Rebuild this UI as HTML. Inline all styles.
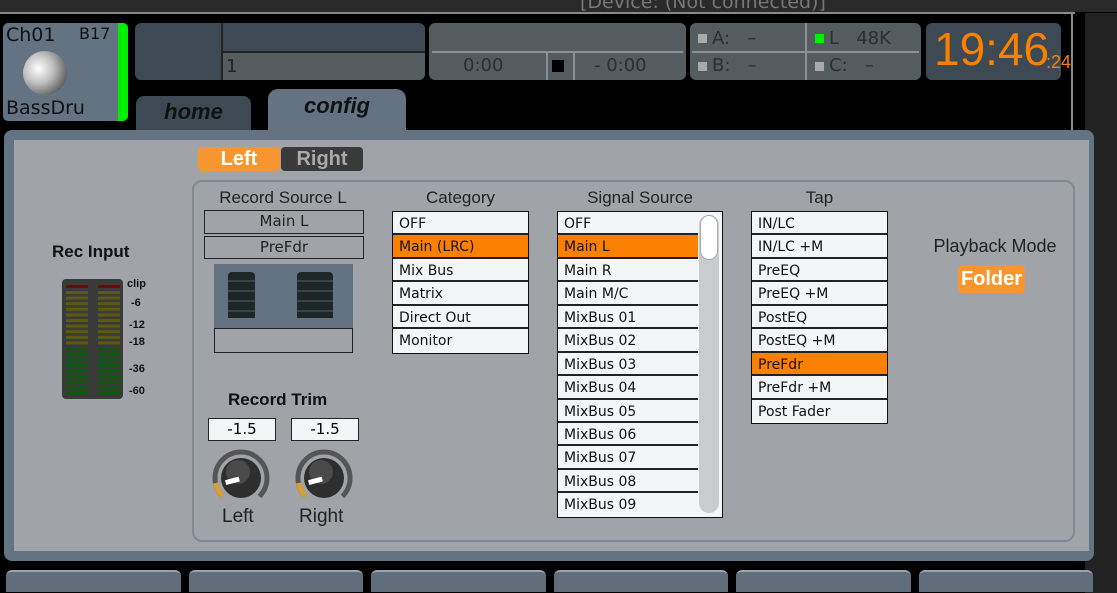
<!DOCTYPE html>
<html><head><meta charset="utf-8"><style>
*{box-sizing:border-box;margin:0;padding:0}
body{width:1117px;height:589px;background:#000;position:relative;overflow:hidden;font-family:"Liberation Sans",sans-serif}
.a{position:absolute}
.list{position:absolute;background:#f3f6f7;border:1.5px solid #111;font-family:"DejaVu Sans","Liberation Sans",sans-serif;font-size:14px;color:#111}
.list div{height:23.45px;border-bottom:2px solid #222;padding-left:6px;line-height:25px}
.list div.sel{background:#fb8000}
.hd{position:absolute;font-size:17px;color:#222;text-align:center}
.bt{position:absolute;top:570px;height:22px;background:#5f6e7a;border-radius:6px 6px 0 0;border-top:2px solid #9aa4ac}
</style></head><body>
<div class="a" style="left:0;top:0;width:1117px;height:12px;background:#2a2a2a"></div>
<div class="a" style="left:580px;top:-9px;color:#777;font-size:19px;font-family:'DejaVu Sans',sans-serif">[Device: (Not connected)]</div>
<div class="a" style="left:0;top:12px;width:1075px;height:2px;background:#8a8a8a"></div>
<div class="a" style="left:1071px;top:13px;width:2px;height:420px;background:#8a8a8a"></div>
<div class="a" style="left:1085px;top:13px;width:32px;height:580px;background:#222"></div>

<!-- channel -->
<div class="a" style="left:3px;top:23px;width:125px;height:98px;background:#637382;border-radius:5px;overflow:hidden">
<div class="a" style="left:115px;top:0;width:10px;height:98px;background:#00ee00"></div>
<div class="a" style="left:3px;top:1px;font-size:19px;font-family:'DejaVu Sans',sans-serif;color:#111">Ch01</div>
<div class="a" style="left:76px;top:1px;font-size:16px;font-family:'DejaVu Sans',sans-serif;color:#111">B17</div>
<div class="a" style="left:20px;top:28px;width:44px;height:44px;border-radius:50%;background:radial-gradient(circle at 35% 40%,#fff,#bbb 40%,#555 80%)"></div>
<div class="a" style="left:3px;top:74px;font-size:19px;font-family:'DejaVu Sans',sans-serif;color:#111">BassDru</div>
</div>
<!-- box1 -->
<div class="a" style="left:135px;top:23px;width:290px;height:57px;background:#3d4a54;border-radius:6px;overflow:hidden">
<div class="a" style="left:86px;top:0;width:2px;height:57px;background:#222"></div>
<div class="a" style="left:88px;top:28px;width:202px;height:2px;background:#222"></div>
<div class="a" style="left:88px;top:30px;width:202px;height:27px;background:#545c60;color:#222;font-size:18px;font-family:'DejaVu Sans',sans-serif;padding-left:3px;line-height:27px">1</div>
</div>
<!-- box2 -->
<div class="a" style="left:429px;top:23px;width:257px;height:57px;background:#545c60;border-radius:6px;overflow:hidden;color:#2a3035;font-size:18px;font-family:'DejaVu Sans',sans-serif">
<div class="a" style="left:3px;top:28px;width:251px;height:2px;background:#8a9094"></div>
<div class="a" style="left:34px;top:32px">0:00</div>
<div class="a" style="left:117px;top:30px;width:2px;height:27px;background:#8a9094"></div>
<div class="a" style="left:123px;top:37px;width:12px;height:12px;background:#000"></div>
<div class="a" style="left:144px;top:30px;width:2px;height:27px;background:#8a9094"></div>
<div class="a" style="left:165px;top:32px">- 0:00</div>
</div>
<!-- box3 -->
<div class="a" style="left:690px;top:23px;width:231px;height:57px;background:#545c60;border-radius:6px;overflow:hidden;color:#2a3035;font-size:18px;font-family:'DejaVu Sans',sans-serif">
<div class="a" style="left:2px;top:28px;width:227px;height:2px;background:#8a9094"></div>
<div class="a" style="left:115px;top:0;width:2px;height:57px;background:#8a9094"></div>
<div class="a" style="left:8px;top:11px;width:9px;height:9px;background:#aaa"></div>
<div class="a" style="left:8px;top:39px;width:9px;height:9px;background:#aaa"></div>
<div class="a" style="left:125px;top:11px;width:9px;height:9px;background:#00ee00"></div>
<div class="a" style="left:125px;top:39px;width:9px;height:9px;background:#aaa"></div>
<div class="a" style="left:22px;top:5px">A:&nbsp;&nbsp; –</div>
<div class="a" style="left:22px;top:32px">B:&nbsp;&nbsp; –</div>
<div class="a" style="left:139px;top:5px">L&nbsp;&nbsp; 48K</div>
<div class="a" style="left:139px;top:32px">C:&nbsp;&nbsp; –</div>
</div>
<!-- clock -->
<div class="a" style="left:926px;top:23px;width:135px;height:57px;background:#3d4a54;border-radius:6px;color:#fb8000;font-family:'Liberation Sans',sans-serif">
<div class="a" style="left:8px;top:1px;font-size:46px;line-height:50px">19:46</div>
<div class="a" style="left:120px;top:29px;font-size:18px">:24</div>
</div>
<!-- tabs -->
<div class="a" style="left:136px;top:96px;width:115px;height:40px;background:#3d4a54;border-radius:8px 8px 0 0;color:#111;font-weight:bold;font-style:italic;font-size:22px;text-align:center;line-height:32px">home</div>
<div class="a" style="left:268px;top:89px;width:138px;height:47px;background:#637382;border-radius:10px 10px 0 0;color:#111;font-weight:bold;font-style:italic;font-size:22px;text-align:center;line-height:34px">config</div>

<!-- main panel -->
<div class="a" style="left:4px;top:130px;width:1090px;height:431px;background:#637382;border-radius:8px"></div>
<div class="a" style="left:14px;top:140px;width:1075px;height:411px;background:#a0a4a8"></div>

<div class="a" style="left:198px;top:147px;width:82px;height:24px;background:#f7962e;border-radius:4px;color:#fff;font-weight:bold;font-size:20px;text-align:center;line-height:24px">Left</div>
<div class="a" style="left:281px;top:147px;width:82px;height:24px;background:#3a3a3a;border-radius:4px;color:#aaa;font-weight:bold;font-size:20px;text-align:center;line-height:24px">Right</div>

<div class="a" style="left:192px;top:180px;width:883px;height:362px;border:2px solid #7e8b96;border-radius:10px"></div>

<div class="hd" style="left:200px;top:188px;width:166px">Record Source L</div>
<div class="a" style="left:204px;top:210px;width:160px;height:24px;border:1.5px solid #222;text-align:center;font-size:15px;font-family:'DejaVu Sans',sans-serif;color:#222;line-height:21px">Main L</div>
<div class="a" style="left:204px;top:236px;width:160px;height:23px;border:1.5px solid #222;text-align:center;font-size:15px;font-family:'DejaVu Sans',sans-serif;color:#222;line-height:20px">PreFdr</div>
<div class="a" style="left:214px;top:264px;width:139px;height:64px;background:#637382"></div>
<div class="a" style="left:228px;top:272px;width:27px;height:46px;background:repeating-linear-gradient(#1e2727 0 8px,#3a4444 8px 10px);border-radius:4px 4px 0 0"></div>
<div class="a" style="left:297px;top:272px;width:36px;height:46px;background:repeating-linear-gradient(#1e2727 0 8px,#3a4444 8px 10px);border-radius:4px 4px 0 0"></div>
<div class="a" style="left:214px;top:328px;width:139px;height:25px;border:1.5px solid #222"></div>

<div class="a" style="left:52px;top:242px;font-weight:bold;font-size:17px;color:#111">Rec Input</div>
<div class="a" style="left:62px;top:279px;width:61px;height:120px;background:#3a3a3a;border-radius:4px">
<svg width="61" height="120">
<g>
<rect x="4" y="6" width="22" height="3" fill="#6a0a0a"/><rect x="36" y="6" width="22" height="3" fill="#6a0a0a"/>
</g>
<g fill="#5c5a10">
<rect x="4" y="12" width="22" height="3"/><rect x="36" y="12" width="22" height="3"/>
<rect x="4" y="17.6" width="22" height="3"/><rect x="36" y="17.6" width="22" height="3"/>
<rect x="4" y="23.2" width="22" height="3"/><rect x="36" y="23.2" width="22" height="3"/>
<rect x="4" y="28.8" width="22" height="3"/><rect x="36" y="28.8" width="22" height="3"/>
<rect x="4" y="34.4" width="22" height="3"/><rect x="36" y="34.4" width="22" height="3"/>
<rect x="4" y="40" width="22" height="3"/><rect x="36" y="40" width="22" height="3"/>
<rect x="4" y="45.6" width="22" height="3"/><rect x="36" y="45.6" width="22" height="3"/>
<rect x="4" y="51.2" width="22" height="3"/><rect x="36" y="51.2" width="22" height="3"/>
<rect x="4" y="56.8" width="22" height="3"/><rect x="36" y="56.8" width="22" height="3"/>
<rect x="4" y="62.4" width="22" height="3"/><rect x="36" y="62.4" width="22" height="3"/>
</g>
<g fill="#0b5a0b">
<rect x="4" y="68" width="22" height="3"/><rect x="36" y="68" width="22" height="3"/>
<rect x="4" y="73.6" width="22" height="3"/><rect x="36" y="73.6" width="22" height="3"/>
<rect x="4" y="79.2" width="22" height="3"/><rect x="36" y="79.2" width="22" height="3"/>
<rect x="4" y="84.8" width="22" height="3"/><rect x="36" y="84.8" width="22" height="3"/>
<rect x="4" y="90.4" width="22" height="3"/><rect x="36" y="90.4" width="22" height="3"/>
<rect x="4" y="96" width="22" height="3"/><rect x="36" y="96" width="22" height="3"/>
<rect x="4" y="101.6" width="22" height="3"/><rect x="36" y="101.6" width="22" height="3"/>
<rect x="4" y="107.2" width="22" height="3"/><rect x="36" y="107.2" width="22" height="3"/>
<rect x="4" y="112.8" width="22" height="3"/><rect x="36" y="112.8" width="22" height="3"/>
</g>
</svg></div>
<div class="a" style="left:127px;top:279px;font-size:11px;color:#111;font-weight:bold;line-height:11px">clip</div>
<div class="a" style="left:131px;top:297px;font-size:11px;color:#111;font-weight:bold">-6</div>
<div class="a" style="left:129px;top:319px;font-size:11px;color:#111;font-weight:bold">-12</div>
<div class="a" style="left:129px;top:336px;font-size:11px;color:#111;font-weight:bold">-18</div>
<div class="a" style="left:129px;top:363px;font-size:11px;color:#111;font-weight:bold">-36</div>
<div class="a" style="left:129px;top:385px;font-size:11px;color:#111;font-weight:bold">-60</div>

<div class="a" style="left:228px;top:390px;font-weight:bold;font-size:17px;color:#111">Record Trim</div>
<div class="a" style="left:208px;top:418px;width:68px;height:23px;background:#f3f6f7;border:1.5px solid #222;text-align:center;font-size:15px;font-family:'DejaVu Sans',sans-serif;line-height:20px">-1.5</div>
<div class="a" style="left:291px;top:418px;width:68px;height:23px;background:#f3f6f7;border:1.5px solid #222;text-align:center;font-size:15px;font-family:'DejaVu Sans',sans-serif;line-height:20px">-1.5</div>
<svg class="a" style="left:208px;top:446px" width="160" height="65">
<g transform="translate(33,32)">
<path d="M-18.4,18.4 A26,26 0 1 1 18.4,18.4" fill="none" stroke="#555" stroke-width="5"/>
<path d="M-18.4,18.4 A26,26 0 0 1 -25.5,5" fill="none" stroke="#d9a030" stroke-width="5"/>
<circle r="20" fill="#2e2e2e"/><circle cx="-3" cy="-6" r="12" fill="#4a4a4a"/>
<rect x="-16" y="-2" width="14" height="5" fill="#fff" transform="rotate(-15)"/>
</g>
<g transform="translate(116,32)">
<path d="M-18.4,18.4 A26,26 0 1 1 18.4,18.4" fill="none" stroke="#555" stroke-width="5"/>
<path d="M-18.4,18.4 A26,26 0 0 1 -25.5,5" fill="none" stroke="#d9a030" stroke-width="5"/>
<circle r="20" fill="#2e2e2e"/><circle cx="-3" cy="-6" r="12" fill="#4a4a4a"/>
<rect x="-16" y="-2" width="14" height="5" fill="#fff" transform="rotate(-15)"/>
</g>
</svg>
<div class="a" style="left:222px;top:506px;font-size:19px;color:#222">Left</div>
<div class="a" style="left:299px;top:506px;font-size:19px;color:#222">Right</div>

<div class="hd" style="left:392px;top:188px;width:137px">Category</div>
<div class="list" style="left:392px;top:211px;width:137px">
<div>OFF</div><div class="sel">Main (LRC)</div><div>Mix Bus</div><div>Matrix</div><div>Direct Out</div><div style="border-bottom:none">Monitor</div>
</div>

<div class="hd" style="left:557px;top:188px;width:166px">Signal Source</div>
<div class="list" style="left:557px;top:211px;width:166px;height:307px;overflow:hidden">
<div style="width:140px">OFF</div><div class="sel" style="width:140px">Main L</div><div style="width:140px">Main R</div><div style="width:140px">Main M/C</div><div style="width:140px">MixBus 01</div><div style="width:140px">MixBus 02</div><div style="width:140px">MixBus 03</div><div style="width:140px">MixBus 04</div><div style="width:140px">MixBus 05</div><div style="width:140px">MixBus 06</div><div style="width:140px">MixBus 07</div><div style="width:140px">MixBus 08</div><div style="width:140px;border-bottom:none">MixBus 09</div>
<span class="a" style="left:141px;top:3px;width:20px;height:298px;background:#c9cbcc;border-radius:10px"></span>
<span class="a" style="left:142px;top:3px;width:18px;height:45px;background:#fff;border:1px solid #aaa;border-radius:9px"></span>
</div>

<div class="hd" style="left:751px;top:188px;width:137px">Tap</div>
<div class="list" style="left:751px;top:211px;width:137px">
<div>IN/LC</div><div>IN/LC +M</div><div>PreEQ</div><div>PreEQ +M</div><div>PostEQ</div><div>PostEQ +M</div><div class="sel">PreFdr</div><div>PreFdr +M</div><div style="border-bottom:none">Post Fader</div>
</div>

<div class="a" style="left:920px;top:236px;width:150px;text-align:center;font-size:18px;color:#222">Playback Mode</div>
<div class="a" style="left:958px;top:265px;width:67px;height:28px;background:#f7962e;border-radius:5px;color:#fff;font-weight:bold;font-size:20px;text-align:center;line-height:28px">Folder</div>

<div class="bt" style="left:6px;width:175px"></div>
<div class="bt" style="left:189px;width:174px"></div>
<div class="bt" style="left:371px;width:175px"></div>
<div class="bt" style="left:554px;width:174px"></div>
<div class="bt" style="left:736px;width:175px"></div>
<div class="bt" style="left:919px;width:174px"></div>
</body></html>
